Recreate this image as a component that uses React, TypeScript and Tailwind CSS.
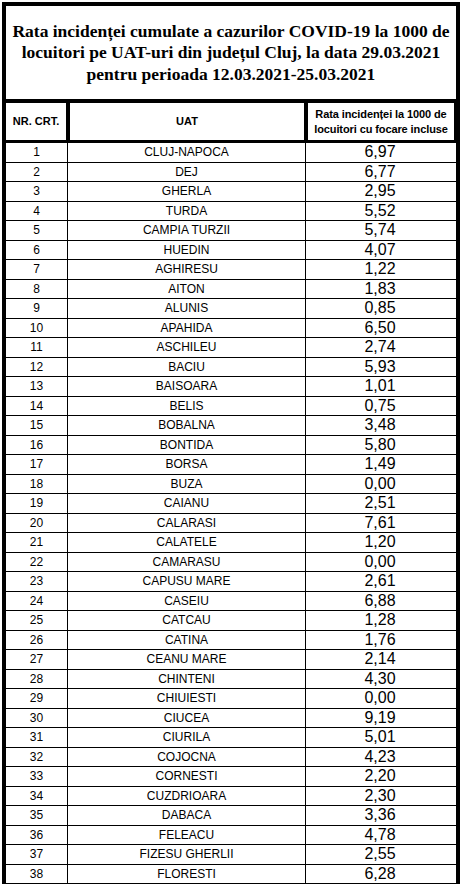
const rows: [number, string, string][] = [
  [1, 'CLUJ-NAPOCA', '6,97'],
  [2, 'DEJ', '6,77'],
  [3, 'GHERLA', '2,95'],
  [4, 'TURDA', '5,52'],
  [5, 'CAMPIA TURZII', '5,74'],
  [6, 'HUEDIN', '4,07'],
  [7, 'AGHIRESU', '1,22'],
  [8, 'AITON', '1,83'],
  [9, 'ALUNIS', '0,85'],
  [10, 'APAHIDA', '6,50'],
  [11, 'ASCHILEU', '2,74'],
  [12, 'BACIU', '5,93'],
  [13, 'BAISOARA', '1,01'],
  [14, 'BELIS', '0,75'],
  [15, 'BOBALNA', '3,48'],
  [16, 'BONTIDA', '5,80'],
  [17, 'BORSA', '1,49'],
  [18, 'BUZA', '0,00'],
  [19, 'CAIANU', '2,51'],
  [20, 'CALARASI', '7,61'],
  [21, 'CALATELE', '1,20'],
  [22, 'CAMARASU', '0,00'],
  [23, 'CAPUSU MARE', '2,61'],
  [24, 'CASEIU', '6,88'],
  [25, 'CATCAU', '1,28'],
  [26, 'CATINA', '1,76'],
  [27, 'CEANU MARE', '2,14'],
  [28, 'CHINTENI', '4,30'],
  [29, 'CHIUIESTI', '0,00'],
  [30, 'CIUCEA', '9,19'],
  [31, 'CIURILA', '5,01'],
  [32, 'COJOCNA', '4,23'],
  [33, 'CORNESTI', '2,20'],
  [34, 'CUZDRIOARA', '2,30'],
  [35, 'DABACA', '3,36'],
  [36, 'FELEACU', '4,78'],
  [37, 'FIZESU GHERLII', '2,55'],
  [38, 'FLORESTI', '6,28'],
];

export default function App() {
  return (
    <div className="w-[462px] h-[890px] bg-white pt-[2px] pl-[2px] overflow-hidden">
      <div className="w-[458px] border-[4px] border-b-0 border-black font-['Liberation_Sans',Arial,sans-serif] text-black">
        {/* Title */}
        <div className="h-[93px] flex items-center justify-center text-center font-['Liberation_Serif','Times_New_Roman',serif] font-bold text-[17.5px] leading-[21.5px] pt-[1px]">
          <p>
            Rata incidenței cumulate a cazurilor COVID-19 la 1000 de
            <br />
            locuitori pe UAT-uri din județul Cluj, la data 29.03.2021
            <br />
            pentru perioada 12.03.2021-25.03.2021
          </p>
        </div>

        {/* Column header */}
        <div className="grid grid-cols-[60px_234px_146px] gap-x-[4px] bg-black border-y-[4px] border-b-[3px] border-black">
          <div className="h-[37px] bg-white flex items-center justify-center font-bold text-[11px]">NR. CRT.</div>
          <div className="h-[37px] bg-white flex items-center justify-center font-bold text-[11px]">UAT</div>
          <div className="h-[37px] bg-white flex items-center justify-center text-center font-bold text-[11px] leading-[15px] tracking-[-0.1px]">
            <span>
              Rata incidenței la 1000 de
              <br />
              locuitori cu focare incluse
            </span>
          </div>
        </div>

        {/* Rows */}
        <div>
          {rows.map(([nr, uat, rate]) => (
            <div key={nr} className="grid grid-cols-[61px_238px_149px] h-[19.5px] border-b border-black">
              <div className="flex items-center justify-center text-[12px] leading-none">{nr}</div>
              <div className="border-l border-black flex items-center justify-center text-[12px] leading-none">{uat}</div>
              <div className="border-l border-black flex items-center justify-center text-[16px] leading-none">{rate}</div>
            </div>
          ))}
        </div>
      </div>
    </div>
  );
}
